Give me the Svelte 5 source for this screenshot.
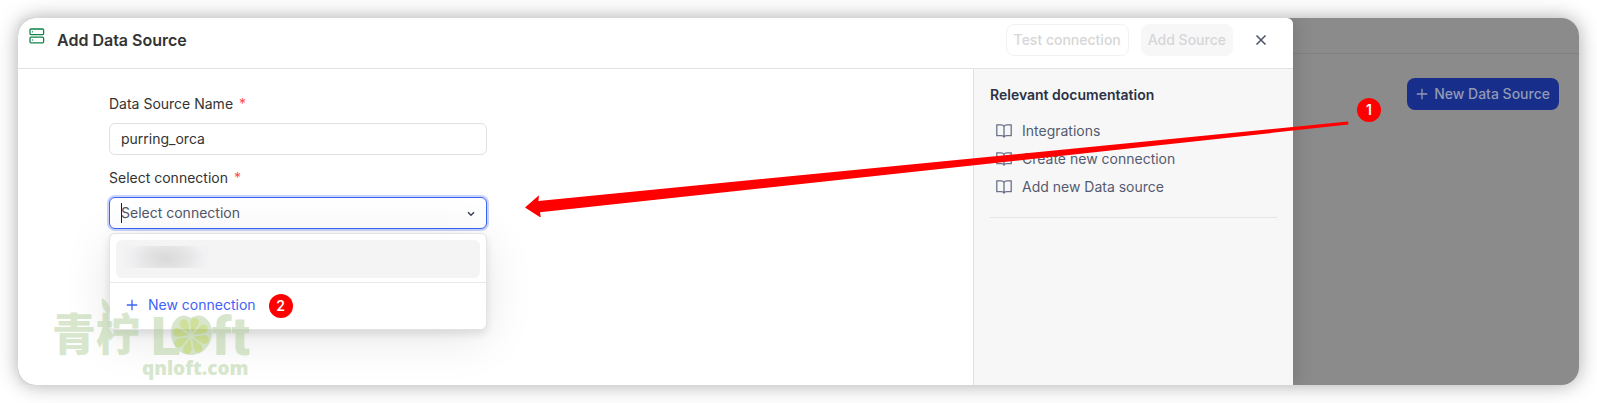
<script>
  let name = $state('purring_orca');
  let query = $state('');
  let menuOpen = $state(true);

  const docs = ['Integrations', 'Create new connection', 'Add new Data source'];

  // one petal per segment of the lime slice
  const petals = [0, 45, 90, 135, 180, 225, 270, 315];
</script>

{#snippet plus()}
  <svg class="plus" viewBox="0 0 12 12" width="12" height="12" aria-hidden="true">
    <path d="M6 .8v10.4M.8 6h10.4" fill="none" stroke="currentColor" stroke-width="1.3" />
  </svg>
{/snippet}

<div class="window">
  <section class="drawer" aria-labelledby="drawer-title">
    <header class="drawer-header">
      <svg class="source-icon" viewBox="0 0 16 16" width="16" height="16" aria-hidden="true">
        <g fill="none" stroke="#15834a" stroke-width="1.3">
          <rect x="1" y="1" width="13.6" height="5.6" rx="1" />
          <rect x="1" y="9.2" width="13.6" height="5.6" rx="1" />
          <path d="M3.6 3.2v1.2M3.6 11.4v1.2" stroke-width="1" />
        </g>
      </svg>
      <h1 id="drawer-title">Add Data Source</h1>
      <button class="btn outline" disabled>Test connection</button>
      <button class="btn filled" disabled>Add Source</button>
      <button class="close" aria-label="Close">
        <svg viewBox="0 0 16 16" width="16" height="16" aria-hidden="true">
          <path d="M3.500 3.500l9 9M12.500 3.500l-9 9" fill="none" stroke="#4a5068" stroke-width="1.5" />
        </svg>
      </button>
    </header>

    <div class="drawer-body">
      <form class="form">
        <div class="field">
          <label for="source-name">Data Source Name <span class="required">*</span></label>
          <input id="source-name" type="text" bind:value={name} />
        </div>
        <div class="field">
          <label for="connection">Select connection <span class="required">*</span></label>
          <div class="select">
            <input
              id="connection"
              class="active"
              type="text"
              role="combobox"
              aria-expanded={menuOpen}
              aria-controls="connection-menu"
              placeholder="Select connection"
              bind:value={query}
              onclick={() => (menuOpen = true)}
            />
            {#if !query}<span class="caret"></span>{/if}
            <svg class="chevron" viewBox="0 0 8 6" width="8" height="6" aria-hidden="true">
              <path d="M1 1.200l3 3 3-3" fill="none" stroke="#3c4257" stroke-width="1.5" />
            </svg>
            {#if menuOpen}
              <div class="menu" id="connection-menu">
                <button type="button" class="option" aria-label="Existing connection">
                  <span class="smudge"></span>
                </button>
                <div class="menu-footer">
                  <button type="button" class="new-connection">{@render plus()}New connection</button>
                  <span class="badge">2</span>
                </div>
              </div>
            {/if}
          </div>
        </div>
      </form>

      <aside class="docs">
        <h2>Relevant documentation</h2>
        <ul>
          {#each docs as doc}
            <li>
              <a href="#docs">
                <svg viewBox="0 0 16 16" width="16" height="16" aria-hidden="true">
                  <path
                    d="M8 3.400C7.400 2.300 6.500 1.800 5.200 1.800H.8v10.800h4.600c1.300 0 2.100.5 2.600 1.400.5-.9 1.300-1.400 2.600-1.400h4.600V1.800h-4.400C9.500 1.800 8.600 2.300 8 3.400v11.200"
                    fill="none" stroke="#6c7389" stroke-width="1.3" />
                </svg>
                {doc}
              </a>
            </li>
          {/each}
        </ul>
        <hr />
      </aside>
    </div>
  </section>

  <main class="page">
    <div class="topbar"></div>
    <div class="page-body">
      <button class="new-source">{@render plus()}New Data Source</button>
    </div>
  </main>

  <!-- annotations over the window -->
  <svg class="arrow" viewBox="0 0 824 96" aria-hidden="true">
    <path d="M0 86.500L14 74.300l-.6 5.700L823 .6l.5 3-808.500 87.700.8 5.400z" fill="#f00" />
  </svg>
  <span class="badge step-one">1</span>

  <svg class="watermark" viewBox="0 0 200 84" width="200" height="84">
    <g class="mark">
      <text class="cn" x="-1" y="53">青柠</text>
      <text class="latin" x="98" y="57">L</text>
      <text class="latin" x="159" y="57">ft</text>
      <text class="domain" x="89" y="77">qnloft.com</text>
      <path d="M49 0c6 4 9 9 7 16-6-3-8-9-7-16z" />
      <path d="M138 20c9-7 21 1 21 14 0 14-10 23-21 23s-20-9-20-23c0-13 11-21 20-14z" />
    </g>
    <g class="lime">
      {#each petals as angle}
        <path d="M138 35.500l-3.800-9c-1.500-4.500.8-7 3.800-7s5.300 2.500 3.800 7z" transform="rotate({angle + 15} 138 38)" />
      {/each}
    </g>
  </svg>
</div>

<style>
  :global(body) {
    padding: 18px;
    background: #fff;
    font-family: Inter, 'Liberation Sans', sans-serif;
  }

  .window {
    position: relative;
    display: flex;
    min-height: calc(100vh - 36px);
    border-radius: 18px;
    background: #8b8b8b;
    box-shadow: 0 0 20px rgba(0, 0, 0, 0.34);
    font-size: 14px;
    line-height: 22px;
    color: #333;
  }

  button, input {
    box-sizing: border-box;
    font: inherit;
  }
  button {
    padding: 0;
    border: none;
    background: none;
    cursor: pointer;
  }
  button:disabled { cursor: not-allowed; }

  .drawer {
    flex: 1;
    display: flex;
    flex-direction: column;
    background: #fff;
    border-radius: 18px 6px 0 18px;
    box-shadow: 6px 0 16px rgba(0, 0, 0, 0.1);
    clip-path: inset(0 -40px 0 0);
  }

  .drawer-header {
    display: flex;
    align-items: center;
    padding: 6px 24px 12px 11px;
    border-bottom: 1px solid #e3e3e3;
  }
  .source-icon {
    align-self: flex-start;
    margin: 4px 12px 0 0;
  }
  h1 {
    flex: 1;
    margin: 0;
    font-size: 16px;
    font-weight: 600;
    line-height: 24px;
  }

  .btn {
    height: 32px;
    margin-right: 12px;
    padding: 0 7px;
    border: 1px solid #f2f2f2;
    border-radius: 8px;
    font-weight: 500;
    color: #d6d6d8;
  }
  .btn.filled {
    margin-right: 20px;
    padding: 0 6px;
    background: #f7f7f7;
    border-color: #f7f7f7;
  }
  .close { display: flex; }

  .drawer-body {
    flex: 1;
    display: flex;
  }

  .form {
    flex: 1;
    display: flex;
    flex-direction: column;
    gap: 12px;
    padding: 24px 91px;
  }
  .field {
    display: flex;
    flex-direction: column;
    gap: 8px;
    max-width: 378px;
  }
  .required {
    margin-left: 2px;
    color: #ff4d4f;
  }

  input {
    width: 100%;
    height: 32px;
    padding: 0 11px 2px;
    border: 1px solid #e0e0e0;
    border-radius: 6px;
    background: #fff;
    color: #333;
    outline: none;
  }
  input::placeholder {
    color: #4f566b;
    opacity: 1;
  }
  input.active {
    border-color: #3e63f5;
    box-shadow: 0 0 0 2px rgba(62, 99, 245, 0.28);
  }

  .select { position: relative; }
  .caret {
    position: absolute;
    top: 6px;
    left: 12px;
    width: 1px;
    height: 20px;
    background: #222;
  }
  .chevron {
    position: absolute;
    top: 14px;
    right: 12px;
  }

  .menu {
    position: absolute;
    top: 36px;
    left: 0;
    right: 0;
    border: 1px solid #e3e3e3;
    border-radius: 6px;
    background: #fff;
    box-shadow: 0 4px 8px rgba(0, 0, 0, 0.1), 0 8px 48px rgba(0, 0, 0, 0.1);
  }
  .option {
    display: flex;
    align-items: flex-start;
    width: calc(100% - 12px);
    height: 38px;
    margin: 6px 6px 4px;
    padding: 6px 8px;
    border-radius: 6px;
    background: #f4f4f4;
  }
  .smudge {
    width: 84px;
    height: 22px;
    background: radial-gradient(ellipse 40px 22px at 50% 55%, #d9d9d9, #e4e4e5 50%, #f2f2f4);
  }
  .menu-footer {
    display: flex;
    align-items: flex-start;
    gap: 13px;
    padding: 11px 16px;
    border-top: 1px solid #e8e8e8;
  }
  .new-connection {
    display: flex;
    align-items: center;
    gap: 10px;
    color: #3e63f5;
  }

  .badge {
    width: 24px;
    height: 24px;
    border-radius: 50%;
    background: #f00;
    color: #fff;
    font-weight: 600;
    line-height: 23px;
    text-align: center;
  }

  .docs {
    box-sizing: border-box;
    width: 320px;
    padding: 15px 16px;
    border-left: 1px solid #e0e0e0;
    background: #f7f7f7;
  }
  h2 {
    margin: 0 0 15px;
    font-size: 14px;
    font-weight: 600;
    line-height: 22px;
    color: #2b3245;
  }
  ul {
    display: flex;
    flex-direction: column;
    gap: 8px;
    margin: 0;
    padding: 0 6px;
    list-style: none;
  }
  li a {
    display: flex;
    align-items: center;
    gap: 10px;
    line-height: 20px;
    color: #545b70;
    text-decoration: none;
  }
  hr {
    margin: 20px 0 0;
    border: none;
    border-top: 1px solid #e6e6e6;
  }

  .page { width: 286px; }
  .topbar {
    height: 35px;
    border-bottom: 1px solid #808080;
  }
  .page-body {
    display: flex;
    justify-content: flex-end;
    padding: 24px 20px;
  }
  .new-source {
    display: flex;
    align-items: center;
    gap: 6px;
    height: 32px;
    padding: 0 9px;
    border-radius: 8px;
    background: #172f8b;
    color: #9299b5;
    font-weight: 500;
  }

  .arrow {
    position: absolute;
    top: 103px;
    left: 507px;
    right: 230px;
    pointer-events: none;
  }
  .step-one {
    position: absolute;
    top: 80px;
    right: 198px;
  }

  .watermark {
    position: absolute;
    left: 35px;
    bottom: 3px;
    overflow: visible;
    opacity: 0.45;
    pointer-events: none;
  }
  .mark { fill: #a8ca90; }
  .lime { fill: #97bd1e; }
  .cn {
    font: 900 44px 'Noto Sans CJK SC', sans-serif;
  }
  .latin {
    font: 900 54px Roboto, sans-serif;
  }
  .domain {
    font: 900 19px 'Noto Sans', sans-serif;
  }
</style>
